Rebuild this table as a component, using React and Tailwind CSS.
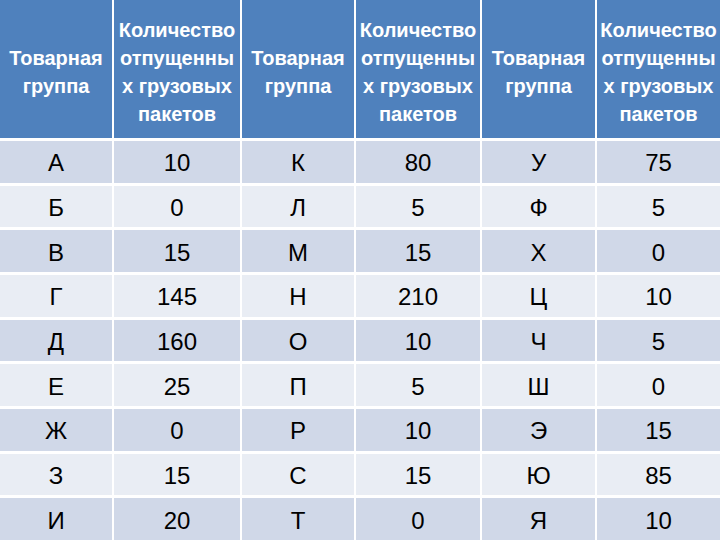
import React from "react";

const rows = [
  ["А", "10", "К", "80", "У", "75"],
  ["Б", "0", "Л", "5", "Ф", "5"],
  ["В", "15", "М", "15", "Х", "0"],
  ["Г", "145", "Н", "210", "Ц", "10"],
  ["Д", "160", "О", "10", "Ч", "5"],
  ["Е", "25", "П", "5", "Ш", "0"],
  ["Ж", "0", "Р", "10", "Э", "15"],
  ["З", "15", "С", "15", "Ю", "85"],
  ["И", "20", "Т", "0", "Я", "10"],
];

function GroupHead() {
  return (
    <div className="flex flex-col items-center justify-center bg-[#4f81bd] pt-[6px] text-center">
      <span>Товарная</span>
      <span>группа</span>
    </div>
  );
}

function CountHead() {
  return (
    <div className="flex flex-col items-center justify-center whitespace-nowrap bg-[#4f81bd] pt-[6px] text-center">
      <span>Количество</span>
      <span>отпущенны</span>
      <span>х грузовых</span>
      <span>пакетов</span>
    </div>
  );
}

export default function App() {
  return (
    <div
      className="grid h-[540px] w-[720px] grid-cols-[112px_126px_112px_124px_113px_123px] grid-rows-[138px_repeat(9,1fr)] gap-x-[2px] gap-y-[3px] overflow-hidden bg-white"
      style={{ fontFamily: '"Liberation Sans", Arial, sans-serif' }}
    >
      <div className="col-span-6 grid grid-cols-subgrid text-[20px] font-bold leading-[28px] text-white">
        <GroupHead />
        <CountHead />
        <GroupHead />
        <CountHead />
        <GroupHead />
        <CountHead />
      </div>
      {rows.map((row, i) => (
        <div
          key={i}
          className={
            "col-span-6 grid grid-cols-subgrid text-[24px] text-black " +
            (i % 2 === 0 ? "[&>div]:bg-[#d0d8e8]" : "[&>div]:bg-[#e9edf4]")
          }
        >
          {row.map((cell, j) => (
            <div key={j} className="flex items-center justify-center pt-[3px]">
              {cell}
            </div>
          ))}
        </div>
      ))}
    </div>
  );
}
